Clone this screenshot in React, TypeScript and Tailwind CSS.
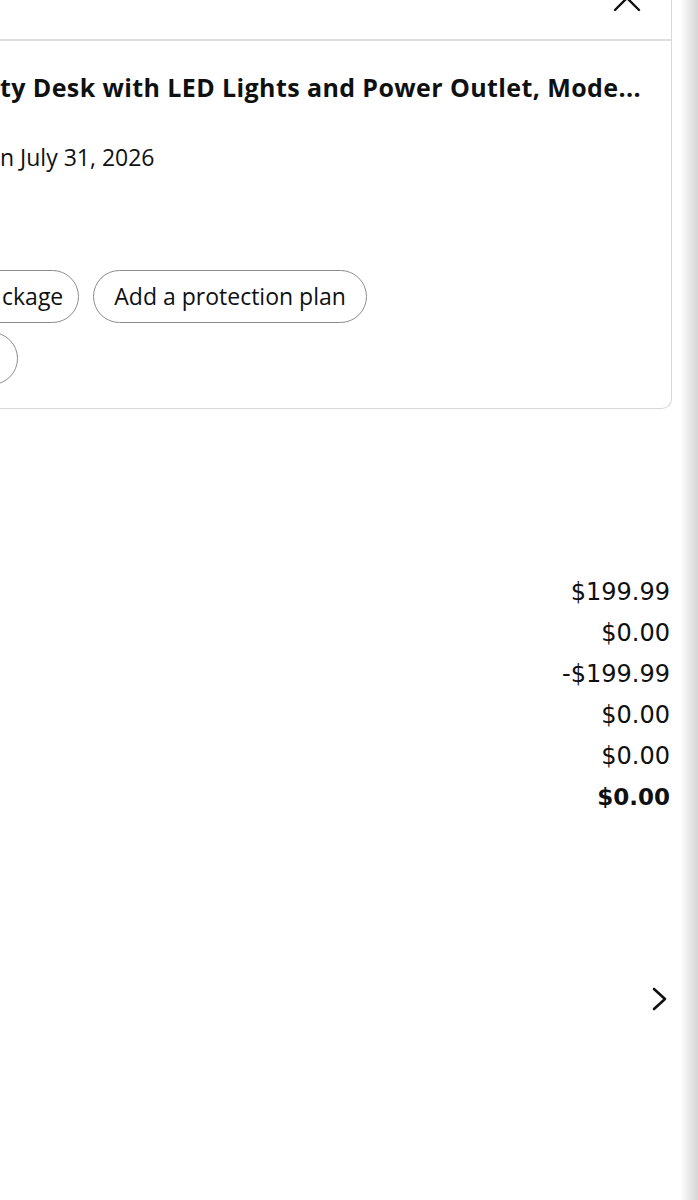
import React from 'react';

const prices = [
  { value: '$199.99', bold: false },
  { value: '$0.00', bold: false },
  { value: '-$199.99', bold: false },
  { value: '$0.00', bold: false },
  { value: '$0.00', bold: false },
  { value: '$0.00', bold: true },
];

const App: React.FC = () => {
  return (
    <div className="flex h-[1200px] w-full overflow-hidden bg-white text-[#0f1111] font-['Open_Sans',sans-serif]">
      <div className="w-[680px] shrink-0">
        {/* order card, cut off on the left */}
        <div className="w-[672px] border-r border-b border-[#d5d9d9] rounded-br-[10px] overflow-hidden">
          <div className="h-[41px] border-b-2 border-[#dedede] flex justify-end pr-[30px]">
            <svg width="28" height="28" viewBox="0 0 28 28" className="-mt-[16px]" fill="none" stroke="#0f1111" strokeWidth="2.4" strokeLinecap="round">
              <path d="M2 2 L26 26 M26 2 L2 26" />
            </svg>
          </div>
          <div className="pt-[29px] pb-[23px]">
            <p className="text-[25px] leading-[34px] font-bold whitespace-nowrap tracking-[0.4px]">
              ty Desk with LED Lights and Power Outlet, Mode...
            </p>
            <p className="mt-[38px] text-[23px] leading-[30px] whitespace-nowrap">n July 31, 2026</p>
            <div className="mt-[98px] flex gap-[14px]">
              <button className="-ml-[30px] h-[53px] pl-[31px] pr-[15px] rounded-full border-[1.5px] border-[#8a8c8c] text-[23px] bg-white">
                ckage
              </button>
              <button className="h-[53px] px-[20px] rounded-full border-[1.5px] border-[#8a8c8c] text-[23px] bg-white">
                Add a protection plan
              </button>
            </div>
            <div className="mt-[9px] flex">
              <div className="-ml-[60px] h-[53px] w-[78px] rounded-full border-[1.5px] border-[#8a8c8c]" />
            </div>
          </div>
        </div>

        {/* order summary amounts */}
        <div className="mt-[163px] pr-[10px] flex flex-col items-end font-['DejaVu_Sans',sans-serif] text-[24px]">
          {prices.map((p, i) => (
            <div key={i} className={`leading-[41px] ${p.bold ? 'font-bold text-[23px]' : ''}`}>
              {p.value}
            </div>
          ))}
        </div>

        <div className="mt-[169px] flex justify-end pr-[12px]">
          <svg width="16" height="24" viewBox="0 0 16 24" fill="none" stroke="#0f1111" strokeWidth="2.6" strokeLinecap="round" strokeLinejoin="round">
            <polyline points="2,2 13,12 2,22" />
          </svg>
        </div>
      </div>
      <div className="flex-1 bg-linear-to-r from-white to-[#d6d6d6]" />
    </div>
  );
};

export default App;
